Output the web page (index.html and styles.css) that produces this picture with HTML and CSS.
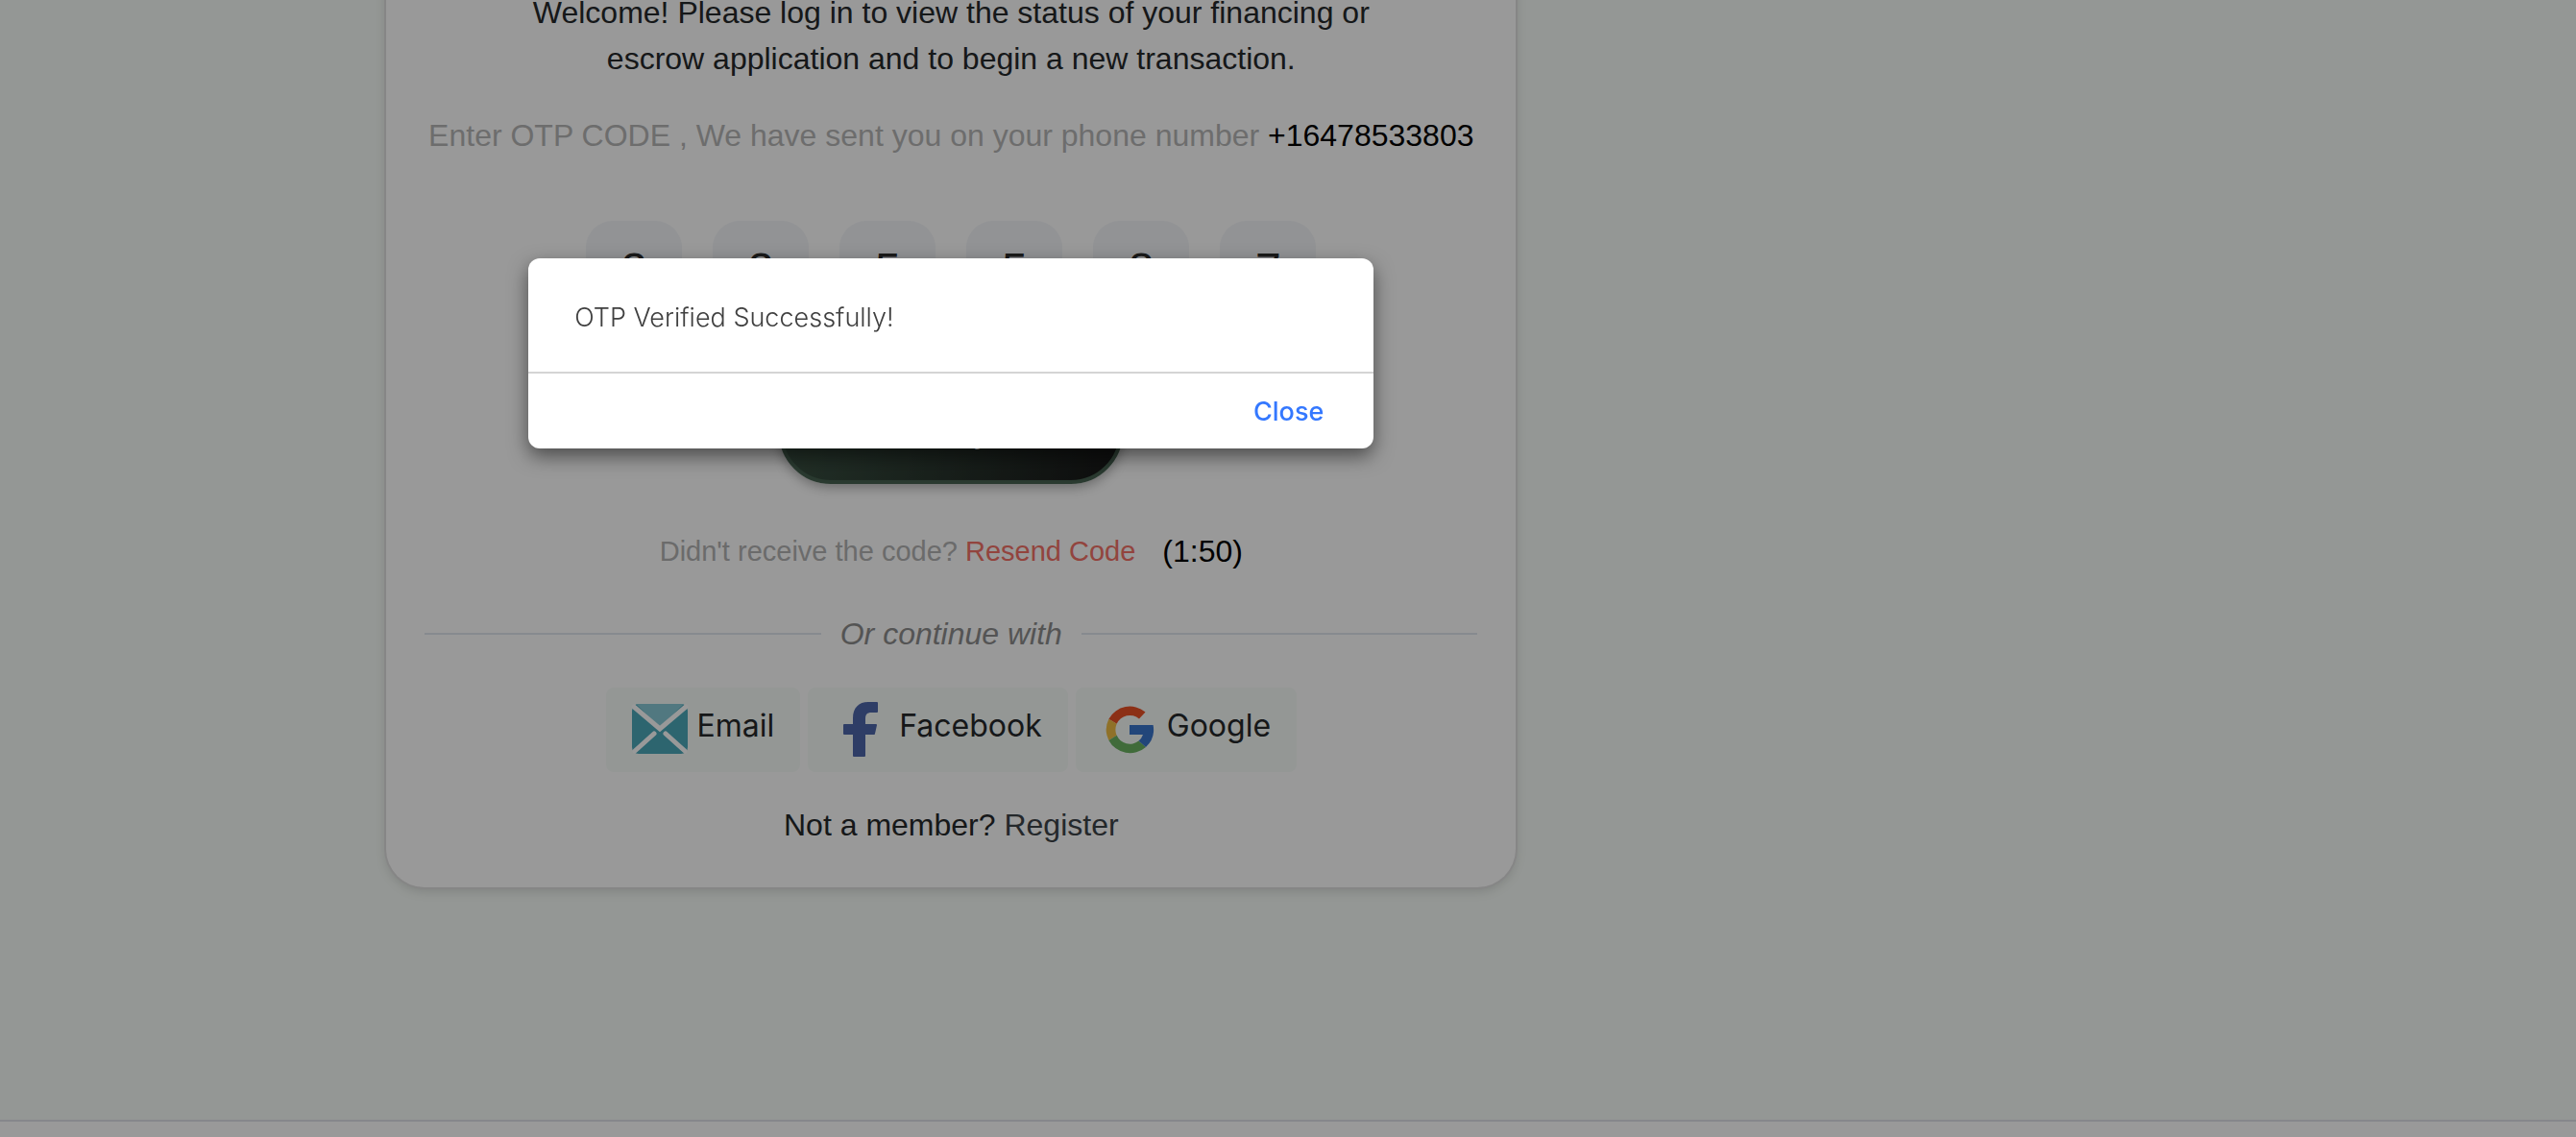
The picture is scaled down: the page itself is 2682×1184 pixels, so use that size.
FILE: index.html
```html
<!DOCTYPE html>
<html lang="en">
<head>
<meta charset="utf-8">
<title>Log in</title>
<link rel="stylesheet" href="styles.css">
</head>
<body>
<main class="page">
  <section class="card">
    <p class="welcome">Welcome! Please log in to view the status of your financing or<br>escrow application and to begin a new transaction.</p>
    <p class="hint">Enter OTP CODE , We have sent you on your phone number <span class="phone">+16478533803</span></p>
    <form class="otp">
      <div class="digits">
        <input class="digit" aria-label="Digit 1" maxlength="1" value="3">
        <input class="digit" aria-label="Digit 2" maxlength="1" value="3">
        <input class="digit" aria-label="Digit 3" maxlength="1" value="5">
        <input class="digit" aria-label="Digit 4" maxlength="1" value="5">
        <input class="digit" aria-label="Digit 5" maxlength="1" value="8">
        <input class="digit" aria-label="Digit 6" maxlength="1" value="7">
      </div>
      <button class="verify" type="button">Verify</button>
    </form>
    <div class="resend"><span>Didn't receive the code? <a class="resend-link" href="#">Resend Code</a></span><span class="timer">(1:50)</span></div>
    <div class="divider"><span>Or continue with</span></div>
    <div class="social">
      <button class="social-button" type="button">
        <svg class="social-icon" viewBox="0 0 64 64" aria-hidden="true">
          <rect x="3" y="6" width="58" height="52" rx="7" fill="#4ba8ba"/>
          <path d="M7 6h50L32 30z" fill="#88c9d5"/>
          <path d="M5 9l27 23L59 9M26 37L6 55M38 37l20 18" fill="none" stroke="#fff" stroke-width="5" stroke-linecap="round"/>
        </svg>
        <span class="social-label">Email</span>
      </button>
      <button class="social-button" type="button">
        <svg class="social-icon" viewBox="0 0 64 64" aria-hidden="true">
          <path d="M24 61q-1 0-1-1V38h-9q-1 0-1-1v-9q0-1 1-1h9v-6C23 10 29 4 39 4h9q1 0 1 1v9q0 1-1 1h-6c-4 0-6 2-6 6v6h11q1 0 1 1l-2 9q0 1-1 1h-9v22q0 1-1 1z" fill="#4e66aa"/>
        </svg>
        <span class="social-label">Facebook</span>
      </button>
      <button class="social-button" type="button">
        <svg class="social-icon" viewBox="0 0 64 64" aria-hidden="true">
          <path d="M48.500 14.500A25 25 0 0 0 10.400 21.700L18.700 26.800A15 15 0 0 1 42 21.400z" fill="#ea5026"/>
          <path d="M10.400 21.700A25 25 0 0 0 10.400 43.900L18.700 38.800A15 15 0 0 1 18.700 26.800z" fill="#eebc45"/>
          <path d="M10.400 43.900A25 25 0 0 0 49 51L41.500 44.600A15 15 0 0 1 18.700 38.800z" fill="#6bb262"/>
          <path d="M32 28H56.600A25 25 0 0 1 49 51L41.500 44.600A15 15 0 0 0 46 38H32z" fill="#3a75cc"/>
        </svg>
        <span class="social-label">Google</span>
      </button>
    </div>
    <p class="register">Not a member? <a class="register-link" href="#">Register</a></p>
    <dialog class="modal" open>
      <p class="modal-text">OTP Verified Successfully!</p>
      <div class="modal-actions"><button class="close" type="button">Close</button></div>
    </dialog>
  </section>
</main>
<footer class="footer"></footer>
<div class="backdrop"></div>
</body>
</html>
```
FILE: styles.css
```css
* {
  box-sizing: border-box;
}

body {
  margin: 0;
  min-height: 100vh;
  display: flex;
  flex-direction: column;
  overflow: hidden;
  background: #f7fcf8;
  color: #25282b;
  font: 32px/48px "Liberation Sans", Arial, sans-serif;
}

p {
  margin: 0;
}

a {
  color: inherit;
  text-decoration: none;
}

button,
input {
  border: 0;
  font: inherit;
  color: inherit;
}

.page {
  flex: 1;
  padding-left: 15%;
}

/* The card's top edge is scrolled out of view. */
.card {
  position: relative;
  max-width: 1176px;
  margin-top: -80px;
  padding: 69px 40px 41px;
  border-radius: 40px;
  background: #fff;
  box-shadow: 0 0 0 2px #e0e0e0, 0 4px 12px rgba(0, 0, 0, 0.15);
  text-align: center;
}

.hint {
  margin-top: 32px;
  color: #b6b6b6;
}

.phone,
.timer {
  color: #000;
}

.otp {
  display: flex;
  flex-direction: column;
  align-items: center;
  gap: 66px;
  margin-top: 65px;
}

.digits {
  display: flex;
  gap: 32px;
}

.digit {
  width: 100px;
  height: 100px;
  padding: 0;
  border-radius: 28px;
  background: #f3f5f9;
  color: #2c2c2c;
  font-size: 48px;
  text-align: center;
}

.verify {
  width: 358px;
  height: 108px;
  border: 4px solid #466150;
  border-radius: 54px;
  background: linear-gradient(100deg, #3b5344, #171717);
  box-shadow: 0 4px 12px rgba(0, 0, 0, 0.3);
  color: #fff;
}

.resend {
  display: flex;
  justify-content: center;
  gap: 28px;
  margin-top: 46px;
  color: #b2b2b2;
  font-size: 29px;
}

.resend-link {
  color: #f47268;
}

.timer {
  font-size: 32px;
}

.divider {
  display: flex;
  align-items: center;
  gap: 20px;
  margin-top: 38px;
  color: #8c8c8c;
  font-style: italic;
}

.divider::before,
.divider::after {
  content: "";
  flex: 1;
  height: 2px;
  background: #dfe6ee;
}

.social {
  display: flex;
  justify-content: center;
  gap: 8px;
  margin-top: 32px;
}

.social-button {
  display: flex;
  align-items: center;
  gap: 7px;
  height: 88px;
  padding: 0 27px 2px 24px;
  border-radius: 8px;
  background: #f7fcf9;
  font-family: Inter, sans-serif;
}

.social-icon {
  width: 64px;
  height: 64px;
}

.social-label {
  padding-bottom: 6px;
}

.register {
  margin-top: 31px;
}

.register-link {
  color: #3c4348;
}

.modal {
  position: absolute;
  top: 349px;
  left: 0;
  right: 0;
  z-index: 2;
  width: 880px;
  max-width: 100%;
  margin: 0 auto;
  padding: 0;
  border: 0;
  border-radius: 12px;
  background: #fff;
  box-shadow: 0 8px 20px rgba(0, 0, 0, 0.5);
  font: 300 27px/38px Inter, sans-serif;
  text-align: left;
}

.modal-text {
  padding: 43px 48px 37px;
  color: #404040;
}

.modal-actions {
  display: flex;
  justify-content: flex-end;
  padding: 21px 52px 19px;
  border-top: 2px solid #d4d4d4;
}

.close {
  padding: 0;
  background: none;
  color: #3478ff;
  font-weight: 500;
}

.footer {
  height: 18px;
  border-top: 2px solid #dfe2e8;
  background: #fff;
}

.backdrop {
  position: fixed;
  inset: 0;
  z-index: 1;
  background: rgba(0, 0, 0, 0.4);
}
```
